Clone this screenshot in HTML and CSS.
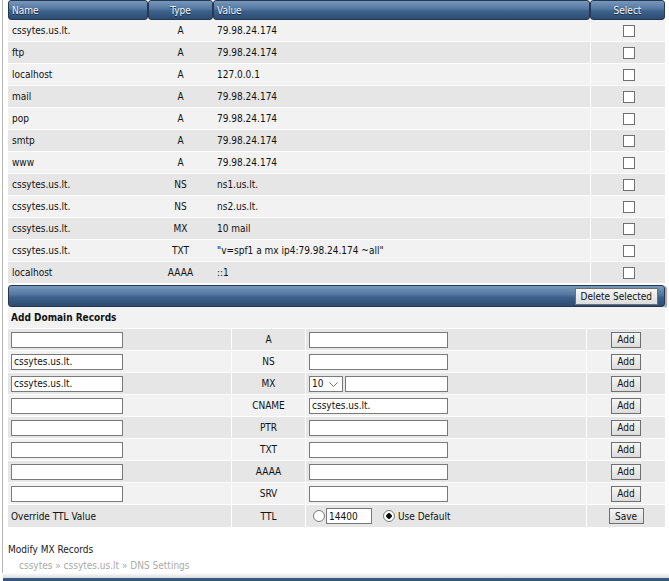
FILE: index.html
```html
<!DOCTYPE html>
<html lang="en">
<head>
  <meta charset="UTF-8" />
  <title>DNS Settings</title>
  <link rel="stylesheet" href="styles.css">
</head>
<body>
  <div class="page">
    <table class="records">
      <colgroup>
        <col class="w-name"><col class="w-type"><col class="w-value"><col class="w-select">
      </colgroup>
      <thead>
        <tr>
          <th class="left">Name</th>
          <th>Type</th>
          <th class="left">Value</th>
          <th>Select</th>
        </tr>
      </thead>
      <tbody>
        <tr class="odd"><td>cssytes.us.lt.</td><td class="mid">A</td><td>79.98.24.174</td><td class="sel"><input type="checkbox"></td></tr>
        <tr class="even"><td>ftp</td><td class="mid">A</td><td>79.98.24.174</td><td class="sel"><input type="checkbox"></td></tr>
        <tr class="odd"><td>localhost</td><td class="mid">A</td><td>127.0.0.1</td><td class="sel"><input type="checkbox"></td></tr>
        <tr class="even"><td>mail</td><td class="mid">A</td><td>79.98.24.174</td><td class="sel"><input type="checkbox"></td></tr>
        <tr class="odd"><td>pop</td><td class="mid">A</td><td>79.98.24.174</td><td class="sel"><input type="checkbox"></td></tr>
        <tr class="even"><td>smtp</td><td class="mid">A</td><td>79.98.24.174</td><td class="sel"><input type="checkbox"></td></tr>
        <tr class="odd"><td>www</td><td class="mid">A</td><td>79.98.24.174</td><td class="sel"><input type="checkbox"></td></tr>
        <tr class="even"><td>cssytes.us.lt.</td><td class="mid">NS</td><td>ns1.us.lt.</td><td class="sel"><input type="checkbox"></td></tr>
        <tr class="odd"><td>cssytes.us.lt.</td><td class="mid">NS</td><td>ns2.us.lt.</td><td class="sel"><input type="checkbox"></td></tr>
        <tr class="even"><td>cssytes.us.lt.</td><td class="mid">MX</td><td>10 mail</td><td class="sel"><input type="checkbox"></td></tr>
        <tr class="odd"><td>cssytes.us.lt.</td><td class="mid">TXT</td><td>"v=spf1 a mx ip4:79.98.24.174 ~all"</td><td class="sel"><input type="checkbox"></td></tr>
        <tr class="even"><td>localhost</td><td class="mid">AAAA</td><td>::1</td><td class="sel"><input type="checkbox"></td></tr>
      </tbody>
    </table>

    <div class="action-bar">
      <button type="button" class="btn">Delete Selected</button>
    </div>

    <table class="add">
      <colgroup>
        <col class="a-name"><col class="a-type"><col class="a-value"><col class="a-btn">
      </colgroup>
      <tr class="add-title"><td colspan="4">Add Domain Records</td></tr>
      <tr class="even"><td><input class="txt name" type="text"></td><td class="mid">A</td><td><input class="txt val" type="text"></td><td class="mid"><button class="btn small">Add</button></td></tr>
      <tr class="odd"><td><input class="txt name" type="text" value="cssytes.us.lt."></td><td class="mid">NS</td><td><input class="txt val" type="text"></td><td class="mid"><button class="btn small">Add</button></td></tr>
      <tr class="even"><td><input class="txt name" type="text" value="cssytes.us.lt."></td><td class="mid">MX</td><td>
        <div class="mx-row">
          <div class="prio-wrap">
            <select class="prio"><option>10</option></select>
            <svg class="chev" width="9" height="5" viewBox="0 0 9 5"><path d="M0.5 0.5 L4.5 4.5 L8.5 0.5" fill="none" stroke="#777" stroke-width="1"/></svg>
          </div>
          <input class="txt val-short" type="text">
        </div>
      </td><td class="mid"><button class="btn small">Add</button></td></tr>
      <tr class="odd"><td><input class="txt name" type="text"></td><td class="mid">CNAME</td><td><input class="txt val" type="text" value="cssytes.us.lt."></td><td class="mid"><button class="btn small">Add</button></td></tr>
      <tr class="even"><td><input class="txt name" type="text"></td><td class="mid">PTR</td><td><input class="txt val" type="text"></td><td class="mid"><button class="btn small">Add</button></td></tr>
      <tr class="odd"><td><input class="txt name" type="text"></td><td class="mid">TXT</td><td><input class="txt val" type="text"></td><td class="mid"><button class="btn small">Add</button></td></tr>
      <tr class="even"><td><input class="txt name" type="text"></td><td class="mid">AAAA</td><td><input class="txt val" type="text"></td><td class="mid"><button class="btn small">Add</button></td></tr>
      <tr class="odd"><td><input class="txt name" type="text"></td><td class="mid">SRV</td><td><input class="txt val" type="text"></td><td class="mid"><button class="btn small">Add</button></td></tr>
      <tr class="even ttl"><td>Override TTL Value</td><td class="mid">TTL</td><td><div class="ttl-row"><input type="radio" name="ttl" class="radio"><input class="txt ttl-val" type="text" value="14400"><input type="radio" name="ttl" class="radio" checked><span>Use Default</span></div></td><td class="mid"><button class="btn save">Save</button></td></tr>
    </table>

    <div class="mx-link">Modify MX Records</div>
    <div class="crumbs">cssytes &raquo; cssytes.us.lt &raquo; DNS Settings</div>
  </div>
  <div class="footer-bar"></div>
</body>
</html>
```

FILE: styles.css
```css
body {
  margin: 0;
  font-family: "DejaVu Sans Condensed", "DejaVu Sans", sans-serif;
  font-size: 10px;
  color: #111;
  background: #fff;
}
.page {
  margin-left: 2px;
  border-left: 1px solid #b8b8b8;
  padding-left: 5px;
  width: 657px;
}
table {
  border-collapse: separate;
  border-spacing: 0;
  width: 657px;
  table-layout: fixed;
}
.w-name { width: 140px; }
.w-type { width: 65px; }
.w-value { width: 377px; }
.w-select { width: 75px; }

.records thead tr {
  height: 20px;
}
.records th {
  padding: 0 3px;
  background: linear-gradient(#7898bd, #52759e 45%, #3e628c 55%, #2c4b72);
  color: #f2f6fb;
  font-weight: normal;
  border: 1px solid #26384f;
  border-radius: 3px;
  text-shadow: 0 1px 0 #1c2e45;
  text-align: center;
}
.records th.left {
  text-align: left;
}
.records tbody tr {
  height: 22px;
}
.records td {
  padding: 0 4px;
  border-bottom: 1px solid #fff;
  white-space: nowrap;
}
.odd td {
  background: #f2f2f2;
}
.even td {
  background: #e6e6e6;
}
.mid {
  text-align: center;
}
.records td.sel {
  border-left: 1px solid #fff;
  text-align: center;
  padding: 0;
}
.sel input {
  appearance: none;
  width: 12px;
  height: 12px;
  margin: 3px 0 0 1px;
  border: 1px solid #707070;
  background: #fff;
}

.action-bar {
  margin-top: 1px;
  height: 22px;
  display: flex;
  justify-content: flex-end;
  align-items: center;
  padding-right: 6px;
  background: linear-gradient(#7898bd, #52759e 45%, #3e628c 55%, #2c4b72);
  border: 1px solid #26384f;
  border-radius: 3px;
  box-sizing: border-box;
  box-shadow: 2px 1px 1px rgba(0, 0, 0, 0.35);
}
.btn {
  font-family: inherit;
  font-size: 10px;
  color: #111;
  height: 17px;
  padding: 0 5px;
  background: linear-gradient(#f6f6f6, #dcdcdc);
  border: 1px solid #6f6f6f;
  border-radius: 0;
  cursor: pointer;
}
.btn.small {
  height: 16px;
  width: 30px;
  padding: 0;
}
.btn.save {
  height: 16px;
  width: 35px;
  padding: 0;
}

.a-name { width: 224px; }
.a-type { width: 74px; }
.a-value { width: 281px; }
.a-btn { width: 78px; }

.add tr {
  height: 22px;
}
.add td {
  padding: 0 0 0 3px;
  border-bottom: 1px solid #fff;
  border-right: 1px solid #fff;
  white-space: nowrap;
}
.add td:last-child {
  border-right: none;
}
.add td.mid {
  padding: 0;
}
.add-title td {
  background: #f2f2f2;
  font-weight: bold;
  font-size: 10px;
  height: 20px;
  border-right: none;
}
.add tr.ttl {
  height: 23px;
}
.txt {
  font-family: inherit;
  font-size: 10px;
  color: #111;
  height: 16px;
  box-sizing: border-box;
  border: 1px solid #7a7a7a;
  padding: 0 2px;
  margin: 0;
  display: block;
  background: #fff;
}
.txt.name {
  width: 112px;
}
.txt.val {
  width: 139px;
}
.mx-row,
.ttl-row {
  display: flex;
  align-items: center;
}
.prio-wrap {
  position: relative;
  margin-right: 2px;
}
.prio {
  appearance: none;
  display: block;
  font-family: inherit;
  font-size: 10px;
  color: #111;
  width: 34px;
  height: 16px;
  border: 1px solid #7a7a7a;
  border-radius: 0;
  background: #fff;
  padding: 0 0 0 2px;
  margin: 0;
}
.chev {
  position: absolute;
  right: 5px;
  top: 6px;
  pointer-events: none;
}
.txt.val-short {
  width: 103px;
}
.radio {
  appearance: none;
  width: 12px;
  height: 12px;
  margin: 0 1px 0 4px;
  border: 1px solid #7a7a7a;
  border-radius: 50%;
  background: #fff;
}
.radio:checked {
  background: radial-gradient(circle, #111 0 2.5px, #fff 3px);
  margin-left: 11px;
}
.txt.ttl-val {
  width: 46px;
}
.ttl-row span {
  margin-left: 2px;
}

.mx-link {
  margin-top: 15px;
  line-height: 14px;
  color: #222;
}
.crumbs {
  padding-left: 11px;
  margin-top: 2px;
  line-height: 14px;
  color: #aaa;
}
.footer-bar {
  margin-left: 3px;
  height: 12px;
  background: linear-gradient(#fff, #dadada 5px, #3a5c84 5px, #2c4b72);
}
```
